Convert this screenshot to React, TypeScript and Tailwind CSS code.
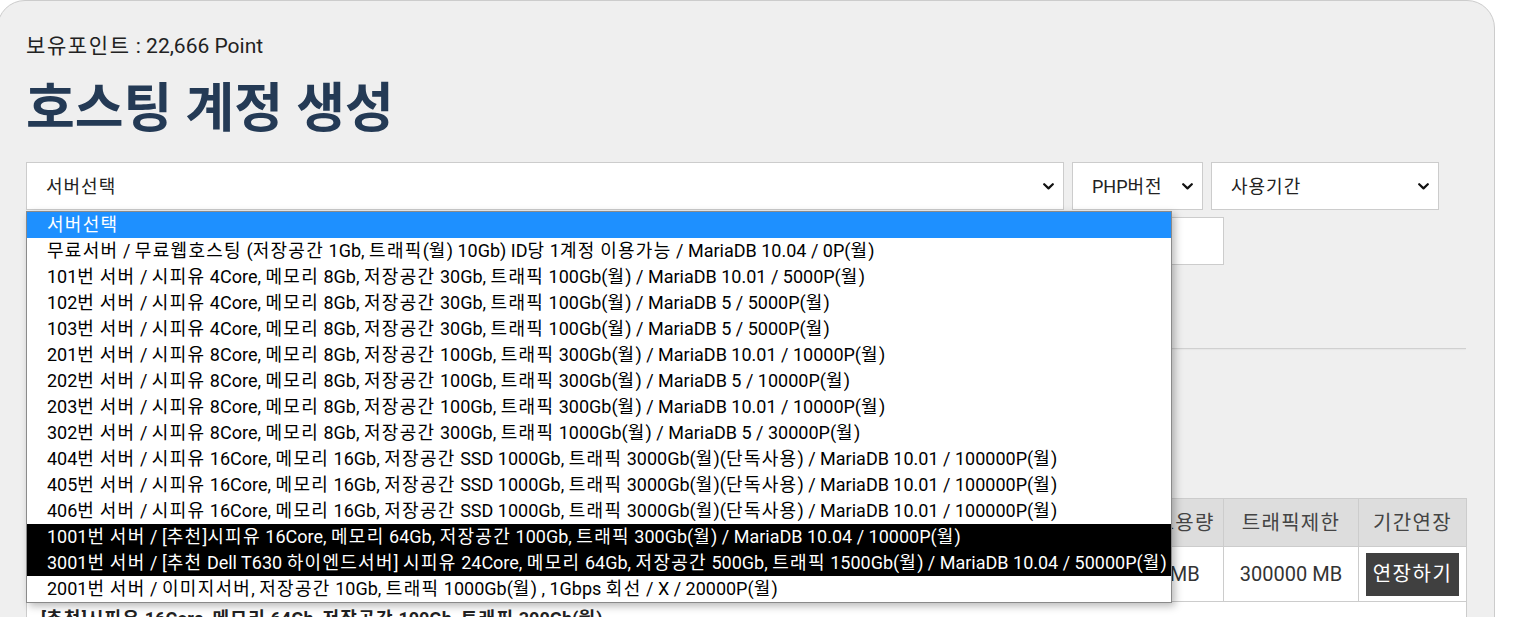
import React from "react";

const options: { text: string; kind: "sel" | "dark" | "normal" }[] = [
  { text: "서버선택", kind: "sel" },
  { text: "무료서버 / 무료웹호스팅 (저장공간 1Gb, 트래픽(월) 10Gb) ID당 1계정 이용가능 / MariaDB 10.04 / 0P(월)", kind: "normal" },
  { text: "101번 서버 / 시피유 4Core, 메모리 8Gb, 저장공간 30Gb, 트래픽 100Gb(월) / MariaDB 10.01 / 5000P(월)", kind: "normal" },
  { text: "102번 서버 / 시피유 4Core, 메모리 8Gb, 저장공간 30Gb, 트래픽 100Gb(월) / MariaDB 5 / 5000P(월)", kind: "normal" },
  { text: "103번 서버 / 시피유 4Core, 메모리 8Gb, 저장공간 30Gb, 트래픽 100Gb(월) / MariaDB 5 / 5000P(월)", kind: "normal" },
  { text: "201번 서버 / 시피유 8Core, 메모리 8Gb, 저장공간 100Gb, 트래픽 300Gb(월) / MariaDB 10.01 / 10000P(월)", kind: "normal" },
  { text: "202번 서버 / 시피유 8Core, 메모리 8Gb, 저장공간 100Gb, 트래픽 300Gb(월) / MariaDB 5 / 10000P(월)", kind: "normal" },
  { text: "203번 서버 / 시피유 8Core, 메모리 8Gb, 저장공간 100Gb, 트래픽 300Gb(월) / MariaDB 10.01 / 10000P(월)", kind: "normal" },
  { text: "302번 서버 / 시피유 8Core, 메모리 8Gb, 저장공간 300Gb, 트래픽 1000Gb(월) / MariaDB 5 / 30000P(월)", kind: "normal" },
  { text: "404번 서버 / 시피유 16Core, 메모리 16Gb, 저장공간 SSD 1000Gb, 트래픽 3000Gb(월)(단독사용) / MariaDB 10.01 / 100000P(월)", kind: "normal" },
  { text: "405번 서버 / 시피유 16Core, 메모리 16Gb, 저장공간 SSD 1000Gb, 트래픽 3000Gb(월)(단독사용) / MariaDB 10.01 / 100000P(월)", kind: "normal" },
  { text: "406번 서버 / 시피유 16Core, 메모리 16Gb, 저장공간 SSD 1000Gb, 트래픽 3000Gb(월)(단독사용) / MariaDB 10.01 / 100000P(월)", kind: "normal" },
  { text: "1001번 서버 / [추천]시피유 16Core, 메모리 64Gb, 저장공간 100Gb, 트래픽 300Gb(월) / MariaDB 10.04 / 10000P(월)", kind: "dark" },
  { text: "3001번 서버 / [추천 Dell T630 하이엔드서버] 시피유 24Core, 메모리 64Gb, 저장공간 500Gb, 트래픽 1500Gb(월) / MariaDB 10.04 / 50000P(월)", kind: "dark" },
  { text: "2001번 서버 / 이미지서버, 저장공간 10Gb, 트래픽 1000Gb(월) , 1Gbps 회선 / X / 20000P(월)", kind: "normal" },
];

// Wrap runs of Hangul so they can take their own letter-spacing.
function Han({ text, cls }: { text: string; cls: string }) {
  const parts = text.split(/([\uAC00-\uD7A3]+)/);
  return (
    <>
      {parts.map((p, i) =>
        /[\uAC00-\uD7A3]/.test(p) ? (
          <span key={i} className={cls}>
            {p}
          </span>
        ) : (
          <React.Fragment key={i}>{p}</React.Fragment>
        )
      )}
    </>
  );
}

function Chevron() {
  return (
    <svg width="11" height="7" viewBox="0 0 11 7" className="shrink-0">
      <path d="M1.2 1.2 L5.5 5.4 L9.8 1.2" fill="none" stroke="#111" strokeWidth="2.2" strokeLinecap="round" strokeLinejoin="round" />
    </svg>
  );
}

function FakeSelect({ label, className }: { label: string; className: string }) {
  return (
    <div className={`flex h-[48px] items-center justify-between border border-[#cccccc] bg-white pl-[19px] pr-[9px] text-[18px] text-[#222] ${className}`}>
      <span>
        <Han text={label} cls="tracking-[1px]" />
      </span>
      <Chevron />
    </div>
  );
}

const cell = "border border-[#cccccc]";

export default function App() {
  return (
    <div className="min-h-[617px] bg-white [font-family:Roboto,'Noto_Sans_CJK_KR',sans-serif] overflow-hidden">
      <div className="-ml-[3px] w-[1498px] rounded-t-[28px] border border-[#cccccc] bg-[#efefef] px-[28px] pt-[30px] pb-[40px]">
        <p className="text-[21px] leading-[30px] text-[#222]">
          <Han text="보유포인트" cls="tracking-[1.6px]" /> : 22,666 Point
        </p>
        <h1 className="mt-[15px] text-[53px] font-bold leading-[67px] text-[#243a55]">호스팅 계정 생성</h1>

        <div className="relative mt-[19px]">
          <div className="flex gap-[8px]">
            <FakeSelect label="서버선택" className="w-[1038px]" />
            <FakeSelect label="PHP버전" className="w-[131px]" />
            <FakeSelect label="사용기간" className="w-[228px]" />
          </div>

          {/* open dropdown list of the server select */}
          <div className="absolute left-0 top-[49px] z-10 w-[1146px] border border-[#8a8a8a] bg-white shadow-[3px_3px_8px_rgba(0,0,0,0.28)]">
            {options.map((o, i) => (
              <div
                key={i}
                className={`h-[26px] whitespace-nowrap pl-[20px] text-[18px] leading-[26px] ${
                  o.kind === "sel" ? "bg-[#1e90ff] text-white" : o.kind === "dark" ? "bg-black text-white" : "bg-white text-black"
                }`}
              >
                <Han text={o.text} cls="tracking-[1.3px]" />
              </div>
            ))}
          </div>

          <div className="mt-[7px] h-[48px] w-[1198px] border border-[#cccccc] bg-white" />
          <div className="mt-[6px] flex h-[50px] w-[160px] items-center justify-center border border-[#8f8f8f] bg-[#e6e6e6] text-[18px] text-[#222]">
            계정생성
          </div>
        </div>

        <hr className="mt-[27px] border-0 border-t border-[#d0d0d0] shadow-[0_1px_1px_rgba(0,0,0,0.04)]" />

        <h2 className="mt-[40px] text-[22px] font-bold text-[#243a55]">호스팅 계정 목록</h2>

        <table className="mt-[76px] w-[1440px] table-fixed border-collapse text-center text-[20px] text-[#333]">
          <colgroup>
            <col className="w-[80px]" />
            <col className="w-[200px]" />
            <col className="w-[361px]" />
            <col className="w-[140px]" />
            <col className="w-[300px]" />
            <col className="w-[116px]" />
            <col className="w-[135px]" />
            <col className="w-[108px]" />
          </colgroup>
          <thead>
            <tr className="h-[48px] bg-[#dddddd] text-[#444]">
              {["번호", "계정ID", "서버", "PHP버전", "사용기간", "디스크용량", "트래픽제한", "기간연장"].map((h) => (
                <th key={h} className={`${cell} font-normal`}>
                  <Han text={h} cls="tracking-[1.3px]" />
                </th>
              ))}
            </tr>
          </thead>
          <tbody>
            <tr className="h-[55px] bg-white">
              <td className={cell}>1</td>
              <td className={cell}>myhost</td>
              <td className={cell}>
                <Han text="1001번 서버" cls="tracking-[1.3px]" />
              </td>
              <td className={cell}>8.1</td>
              <td className={cell}>2025-12-31</td>
              <td className={cell}>100 MB</td>
              <td className={cell}>300000 MB</td>
              <td className={`${cell} px-[7px]`}>
                <button className="h-[43px] w-[93px] bg-[#404040] text-[20px] tracking-[1.5px] text-white">연장하기</button>
              </td>
            </tr>
            <tr className="bg-white">
              <td colSpan={8} className={`${cell} px-[14px] pt-[3px] pb-[10px] text-left text-[18px] font-bold leading-[27px] text-[#222]`}>
                <Han text="[추천]시피유 16Core, 메모리 64Gb, 저장공간 100Gb, 트래픽 300Gb(월)" cls="tracking-[1.3px]" />
              </td>
            </tr>
          </tbody>
        </table>
      </div>
    </div>
  );
}
